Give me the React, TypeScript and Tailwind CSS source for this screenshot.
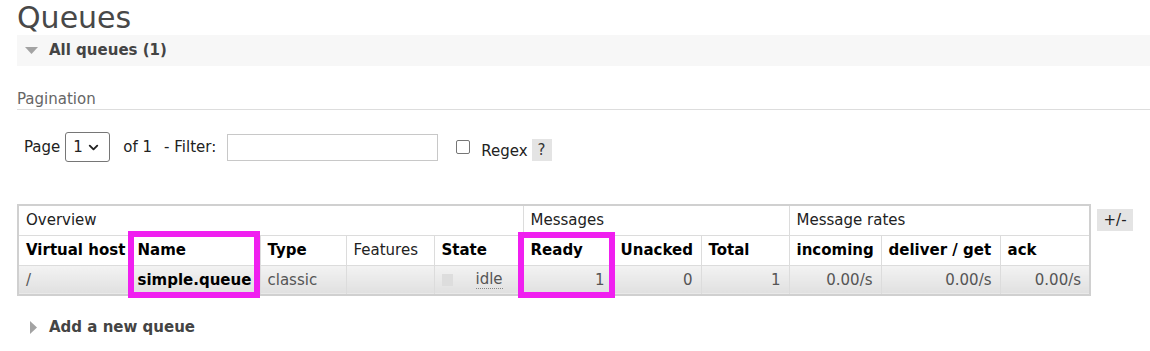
import { ChevronDown } from 'lucide-react';

const COLS = [112, 130, 86, 88, 89, 90, 88, 88, 92, 119, 90];

const HEADERS = [
  'Virtual host',
  'Name',
  'Type',
  'Features',
  'State',
  'Ready',
  'Unacked',
  'Total',
  'incoming',
  'deliver / get',
  'ack',
];

const cell = 'h-[30px] px-[7px] py-0 border border-[#dcdcdc] align-middle';
const rowBg = 'bg-linear-to-b from-[#f3f3f3] to-[#e0e0e0]';

export default function App() {
  return (
    <div className="min-h-[351px] bg-white pl-[17px] font-['DejaVu_Sans',Verdana,sans-serif] text-[15px] text-[#222]">
      <h1 className="h-[35px] pt-[3px] text-[30px] leading-[30px] font-normal text-[#484848]">Queues</h1>

      <div className="flex h-[31px] items-center bg-[#f7f7f7]">
        <svg width="13" height="8" viewBox="0 0 13 8" className="ml-[8px]">
          <polygon points="0,0 13,0 6.5,7" fill="#a3a3a3" />
        </svg>
        <span className="ml-[11px] font-bold text-[#444]">All queues (1)</span>
      </div>

      <div className="mt-[24px] border-b border-[#dddddd] pb-[1px] leading-[18px] text-[#666]">Pagination</div>

      <div className="mt-[22px] flex h-[30px] items-center pl-[7px] text-[#222]">
        <span>Page</span>
        <div className="ml-[5px] flex h-[30px] w-[45px] items-center justify-between rounded-[3px] border border-[#767676] bg-white pl-[7px] pr-[8px]">
          <span>1</span>
          <ChevronDown size={15} strokeWidth={3} color="#222" />
        </div>
        <span className="ml-[13px]">of 1</span>
        <span className="ml-[12px]">- Filter:</span>
        <input className="ml-[11px] h-[27px] w-[211px] border border-[#c8c8c8] bg-white outline-none" />
        <span className="ml-[18px] h-[14px] w-[14px] rounded-[2px] border border-[#767676] bg-white" />
        <span className="ml-[11px] mt-[8px]">Regex</span>
        <span className="ml-[4px] mt-[6px] flex h-[22px] w-[20px] items-center justify-center bg-[#e4e4e4] text-[#333]">?</span>
      </div>

      <div className="mt-[42px] flex items-start">
        <div className="relative">
          <table className="w-[1072px] table-fixed border-collapse border-2 border-[#d0d0d0] text-left">
            <colgroup>
              {COLS.map((w, i) => (
                <col key={i} style={{ width: w }} />
              ))}
            </colgroup>
            <thead>
              <tr>
                <th colSpan={5} className={`${cell} font-normal text-[#222]`}>Overview</th>
                <th colSpan={3} className={`${cell} font-normal text-[#222]`}>Messages</th>
                <th colSpan={3} className={`${cell} font-normal text-[#222]`}>Message rates</th>
              </tr>
              <tr>
                {HEADERS.map((h) => (
                  <th
                    key={h}
                    className={`${cell} whitespace-nowrap ${h === 'Features' ? 'font-normal text-[#222]' : 'font-bold text-black'}`}
                  >
                    {h}
                  </th>
                ))}
              </tr>
            </thead>
            <tbody>
              <tr className="text-[#555]">
                <td className={`${cell} ${rowBg}`}>/</td>
                <td className={`${cell} ${rowBg} font-bold text-black`}>simple.queue</td>
                <td className={`${cell} ${rowBg}`}>classic</td>
                <td className={`${cell} ${rowBg}`}></td>
                <td className={`${cell} ${rowBg}`}>
                  <div className="flex items-center">
                    <span className="h-[12px] w-[11px] bg-[#dddddd]" />
                    <span className="ml-[23px] border-b border-dotted border-[#888] leading-[17px]">idle</span>
                  </div>
                </td>
                {['1', '0', '1', '0.00/s', '0.00/s', '0.00/s'].map((v, i) => (
                  <td key={i} className={`${cell} ${rowBg} pr-[8px] text-right`}>
                    {v}
                  </td>
                ))}
              </tr>
            </tbody>
          </table>

          <div className="pointer-events-none absolute left-[111px] top-[27px] h-[67px] w-[132px] border-[6px] border-[#f01ff0]" />
          <div className="pointer-events-none absolute left-[501px] top-[28px] h-[66px] w-[97px] border-[6px] border-[#f01ff0]" />
        </div>

        <span className="ml-[6px] mt-[5px] flex h-[22px] w-[36px] items-center justify-center bg-[#e4e4e4] text-[#222]">+/-</span>
      </div>

      <div className="mt-[21px] flex h-[20px] items-center">
        <svg width="8" height="13" viewBox="0 0 8 13" className="ml-[13px]">
          <polygon points="0,0 7,6.5 0,13" fill="#a3a3a3" />
        </svg>
        <span className="ml-[11px] font-bold text-[#444]">Add a new queue</span>
      </div>
    </div>
  );
}
